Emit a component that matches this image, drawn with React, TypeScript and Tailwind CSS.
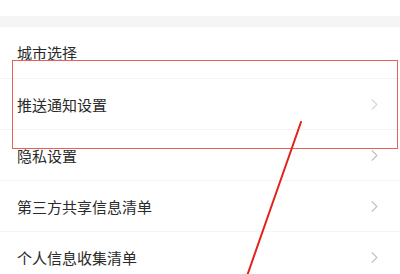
import { ChevronRight } from "lucide-react";

const rows = [
  { label: "城市选择", arrow: false },
  { label: "推送通知设置", arrow: true, faint: true },
  { label: "隐私设置", arrow: true },
  { label: "第三方共享信息清单", arrow: true },
  { label: "个人信息收集清单", arrow: true },
];

export default function App() {
  return (
    <div
      className="relative w-[400px] h-[274px] overflow-hidden bg-white"
      style={{ fontFamily: '"Noto Sans CJK SC", "Noto Sans", sans-serif' }}
    >
      <div className="h-[16px] bg-white" />
      <div className="h-[11px] bg-[#f5f5f5]" />
      <div className="flex flex-col">
        {rows.map((row, i) => (
          <div
            key={row.label}
            className={`flex items-center justify-between h-[51px] pl-[17px] pr-[16px] ${
              i > 0 ? "border-t border-[#f3f3f3]" : ""
            }`}
          >
            <span className="text-[15px] text-[#2a2a2a] leading-none">{row.label}</span>
            {row.arrow && (
              <ChevronRight
                size={19}
                strokeWidth={1.4}
                className={row.faint ? "text-[#d6d6d6]" : "text-[#c2c2c2]"}
              />
            )}
          </div>
        ))}
      </div>

      {/* highlight box */}
      <div className="absolute left-[12px] top-[60px] w-[386px] h-[89px] border border-[#e8605c]" />

      {/* pointer line */}
      <svg className="absolute inset-0" width="400" height="274" viewBox="0 0 400 274">
        <line x1="301" y1="122" x2="247" y2="276" stroke="#e3221c" strokeWidth="2" strokeLinecap="round" />
      </svg>
    </div>
  );
}
